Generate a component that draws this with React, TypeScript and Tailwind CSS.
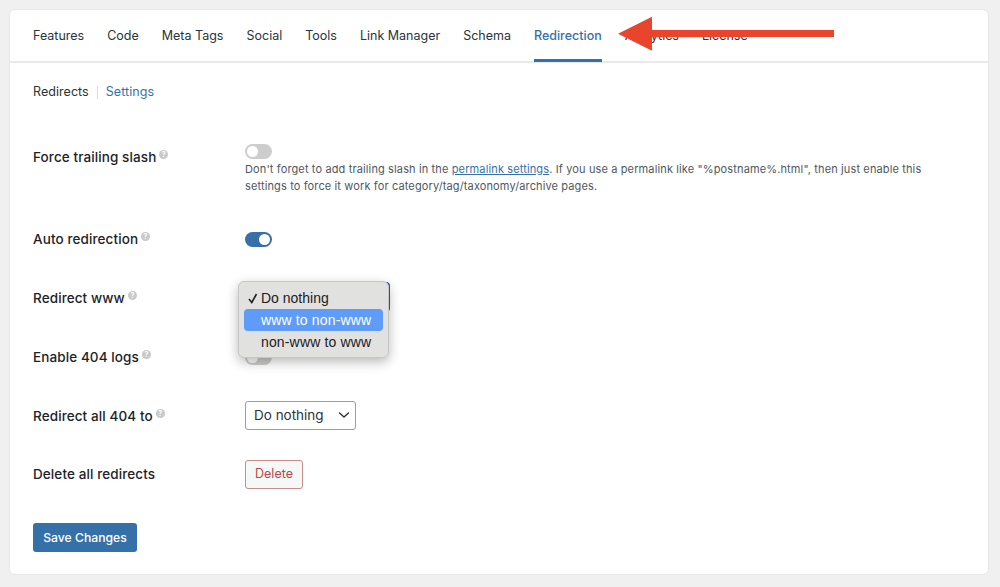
import React from "react";

const tabs = ["Features", "Code", "Meta Tags", "Social", "Tools", "Link Manager", "Schema", "Redirection", "Analytics", "License"];

function Help() {
  return (
    <span className="ml-[3px] mb-[6px] inline-flex h-[9px] w-[9px] items-center justify-center rounded-full bg-[#c9c9c9] text-[7px] font-bold leading-none text-white">
      ?
    </span>
  );
}

function Label({ children, help = true }: { children: React.ReactNode; help?: boolean }) {
  return (
    <div className="flex w-[212px] shrink-0 items-center text-[13.5px] font-medium leading-[20px] tracking-[0.1px] text-[#1d2327]">
      <span>{children}</span>
      {help && <Help />}
    </div>
  );
}

function Toggle({ on = false }: { on?: boolean }) {
  return (
    <div className={`flex h-[15px] w-[27px] items-center rounded-full px-[2px] ${on ? "justify-end bg-[#3571a8]" : "justify-start bg-[#cdcdcd]"}`}>
      <div className="h-[11px] w-[11px] rounded-full bg-white" />
    </div>
  );
}

export default function App() {
  return (
    <div className="h-[587px] w-[1000px] overflow-hidden bg-[#f0f0f1] p-[9px] pr-[11px] font-['Inter','Liberation_Sans',sans-serif]">
      <div className="relative h-[566px] rounded-[6px] border border-[#e6e7e8] bg-white">
        <nav className="flex h-[53px] gap-[23px] border-b-2 border-[#e8e9ea] pl-[23px] text-[12.5px] text-[#2c3338]">
          {tabs.map((t) => (
            <div
              key={t}
              className={`flex h-[52px] items-center ${t === "Redirection" ? "border-b-[3px] border-[#3571a8] pt-[3px] font-medium text-[#3571a8]" : ""}`}
            >
              {t}
            </div>
          ))}
        </nav>

        <div className="mt-[19px] flex h-[20px] items-center pl-[23px] text-[12.5px] tracking-[0.05px]">
          <span className="text-[#2c3338]">Redirects</span>
          <span className="mx-[8px] h-[13px] w-px bg-[#d9dbdd]" />
          <span className="text-[#3571a8]">Settings</span>
        </div>

        <div className="flex flex-col pl-[23px] pt-[41px]">
          <div className="flex h-[78px] items-start">
            <div className="pt-[4px]"><Label>Force trailing slash</Label></div>
            <div className="mt-[1px] flex flex-col">
              <Toggle />
              <p className="mt-[2px] w-[690px] text-[11px] leading-[17px] tracking-[0.13px] text-[#50575e]">
                Don't forget to add trailing slash in the <span className="text-[#3571a8] underline">permalink settings</span>. If you use a permalink like "%postname%.html", then just enable this settings to force it work for category/tag/taxonomy/archive pages.
              </p>
            </div>
          </div>

          <div className="mt-[8px] flex h-[20px] items-center">
            <Label>Auto redirection</Label>
            <Toggle on />
          </div>

          <div className="mt-[39px] flex h-[20px] items-center">
            <Label>Redirect www</Label>
            <div className="mb-[2px] h-[30px] w-[145px] rounded-[4px] border-2 border-[#2d5f94] bg-white" />
          </div>

          <div className="mt-[39px] flex h-[20px] items-center">
            <Label>Enable 404 logs</Label>
            <Toggle />
          </div>

          <div className="mt-[39px] flex h-[20px] items-center">
            <Label>Redirect all 404 to</Label>
            <div className="mb-[2px] flex h-[29px] w-[111px] items-center justify-between rounded-[3px] border border-[#9a9da1] pl-[8px] pr-[4px] text-[13.5px] text-[#2c3338]">
              <span>Do nothing</span>
              <svg width="14" height="14" viewBox="0 0 14 14" fill="none" stroke="#2c3338" strokeWidth="1.5" strokeLinecap="round" strokeLinejoin="round">
                <path d="M2.5 5 L7 9 L11.5 5" />
              </svg>
            </div>
          </div>

          <div className="mt-[38px] flex h-[20px] items-center">
            <Label help={false}>Delete all redirects</Label>
            <button className="flex h-[29px] w-[58px] items-center justify-center rounded-[3px] border border-[#c98b8d] bg-[#f6f7f7] pt-[1px] text-[12.5px] text-[#b5484a]">
              Delete
            </button>
          </div>

          <button className="mt-[39px] flex h-[29px] w-[104px] items-center justify-center rounded-[3px] bg-[#3571a8] pt-[1px] text-[12.2px] font-medium text-white">
            Save Changes
          </button>
        </div>

        <div className="absolute left-[228px] top-[271px] flex h-[77px] w-[151px] flex-col rounded-[6px] border border-[#c6c6c6] bg-[#e1e1e0] px-[5px] pt-[6px] font-['Liberation_Sans',sans-serif] text-[14px] text-[#222] shadow-[0_4px_12px_rgba(0,0,0,0.28)]">
          <div className="relative flex h-[21px] items-center pl-[17px]">
            <svg className="absolute left-[4px] top-[5px]" width="10" height="11" viewBox="0 0 10 11" fill="none" stroke="#222" strokeWidth="1.6">
              <path d="M1 6 L3.8 9.5 L8.5 1" />
            </svg>
            Do nothing
          </div>
          <div className="flex h-[22px] items-center rounded-[4px] bg-[#5f9bf8] pl-[17px] tracking-[0.15px] text-white">www to non-www</div>
          <div className="flex h-[22px] items-center pl-[17px] tracking-[0.15px]">non-www to www</div>
        </div>

        <svg className="absolute left-[608px] top-[6px]" width="218" height="36" viewBox="0 0 218 36" fill="#e8452c">
          <path d="M0 17.7 L34 0.7 L34 14 L216 14 L216 21 L34 21.3 L34 34.7 Z" />
        </svg>
      </div>
    </div>
  );
}
